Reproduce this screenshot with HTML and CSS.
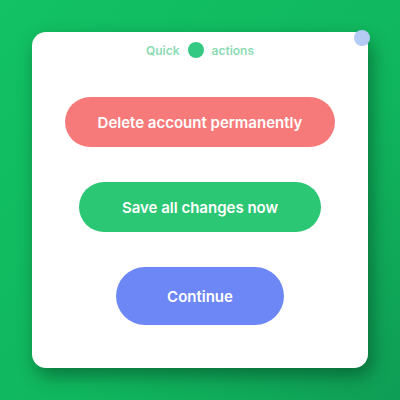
FILE: index.html
```html
<!DOCTYPE html>
<html>
<head>
<meta charset="utf-8">
<link rel="stylesheet" href="styles.css">
</head>
<body>
<div class="card">
  <span class="badge"></span>
  <div class="title">Quick<span class="dot"></span>actions</div>
  <div class="buttons">
    <button class="btn red">Delete account permanently</button>
    <button class="btn green">Save all changes now</button>
    <button class="btn blue">Continue</button>
  </div>
</div>
</body>
</html>
```
FILE: styles.css
```css
html, body { margin: 0; height: 100%; }
body {
  background: linear-gradient(135deg, #12c264 0%, #10b65e 60%, #0f9d55 100%);
  font-family: "Inter", "Liberation Sans", sans-serif;
  display: flex;
  padding: 32px;
  box-sizing: border-box;
}
.card {
  position: relative;
  flex: 1;
  background: #fff;
  border-radius: 14px;
  box-shadow: 4px 8px 18px rgba(0, 40, 20, 0.45);
  display: flex;
  flex-direction: column;
  align-items: center;
  padding-top: 10px;
}
.badge {
  position: absolute;
  top: -2px;
  right: -2px;
  width: 16px;
  height: 16px;
  border-radius: 50%;
  background: #b4cbf3;
}
.title {
  display: flex;
  align-items: center;
  gap: 8px;
  color: #8cdcb4;
  font-size: 12px;
  font-weight: 600;
}
.dot {
  width: 16px;
  height: 16px;
  border-radius: 50%;
  background: #34c983;
}
.buttons {
  display: flex;
  flex-direction: column;
  align-items: center;
  gap: 35px;
  margin-top: 39px;
}
.btn {
  border: none;
  border-radius: 999px;
  color: #fff;
  font-family: inherit;
  font-size: 15px;
  font-weight: 600;
}
.red { background: #f77a7a; width: 270px; height: 50px; }
.green { background: #2cc774; width: 242px; height: 50px; }
.blue { background: #6d87f7; width: 168px; height: 58px; }
```
